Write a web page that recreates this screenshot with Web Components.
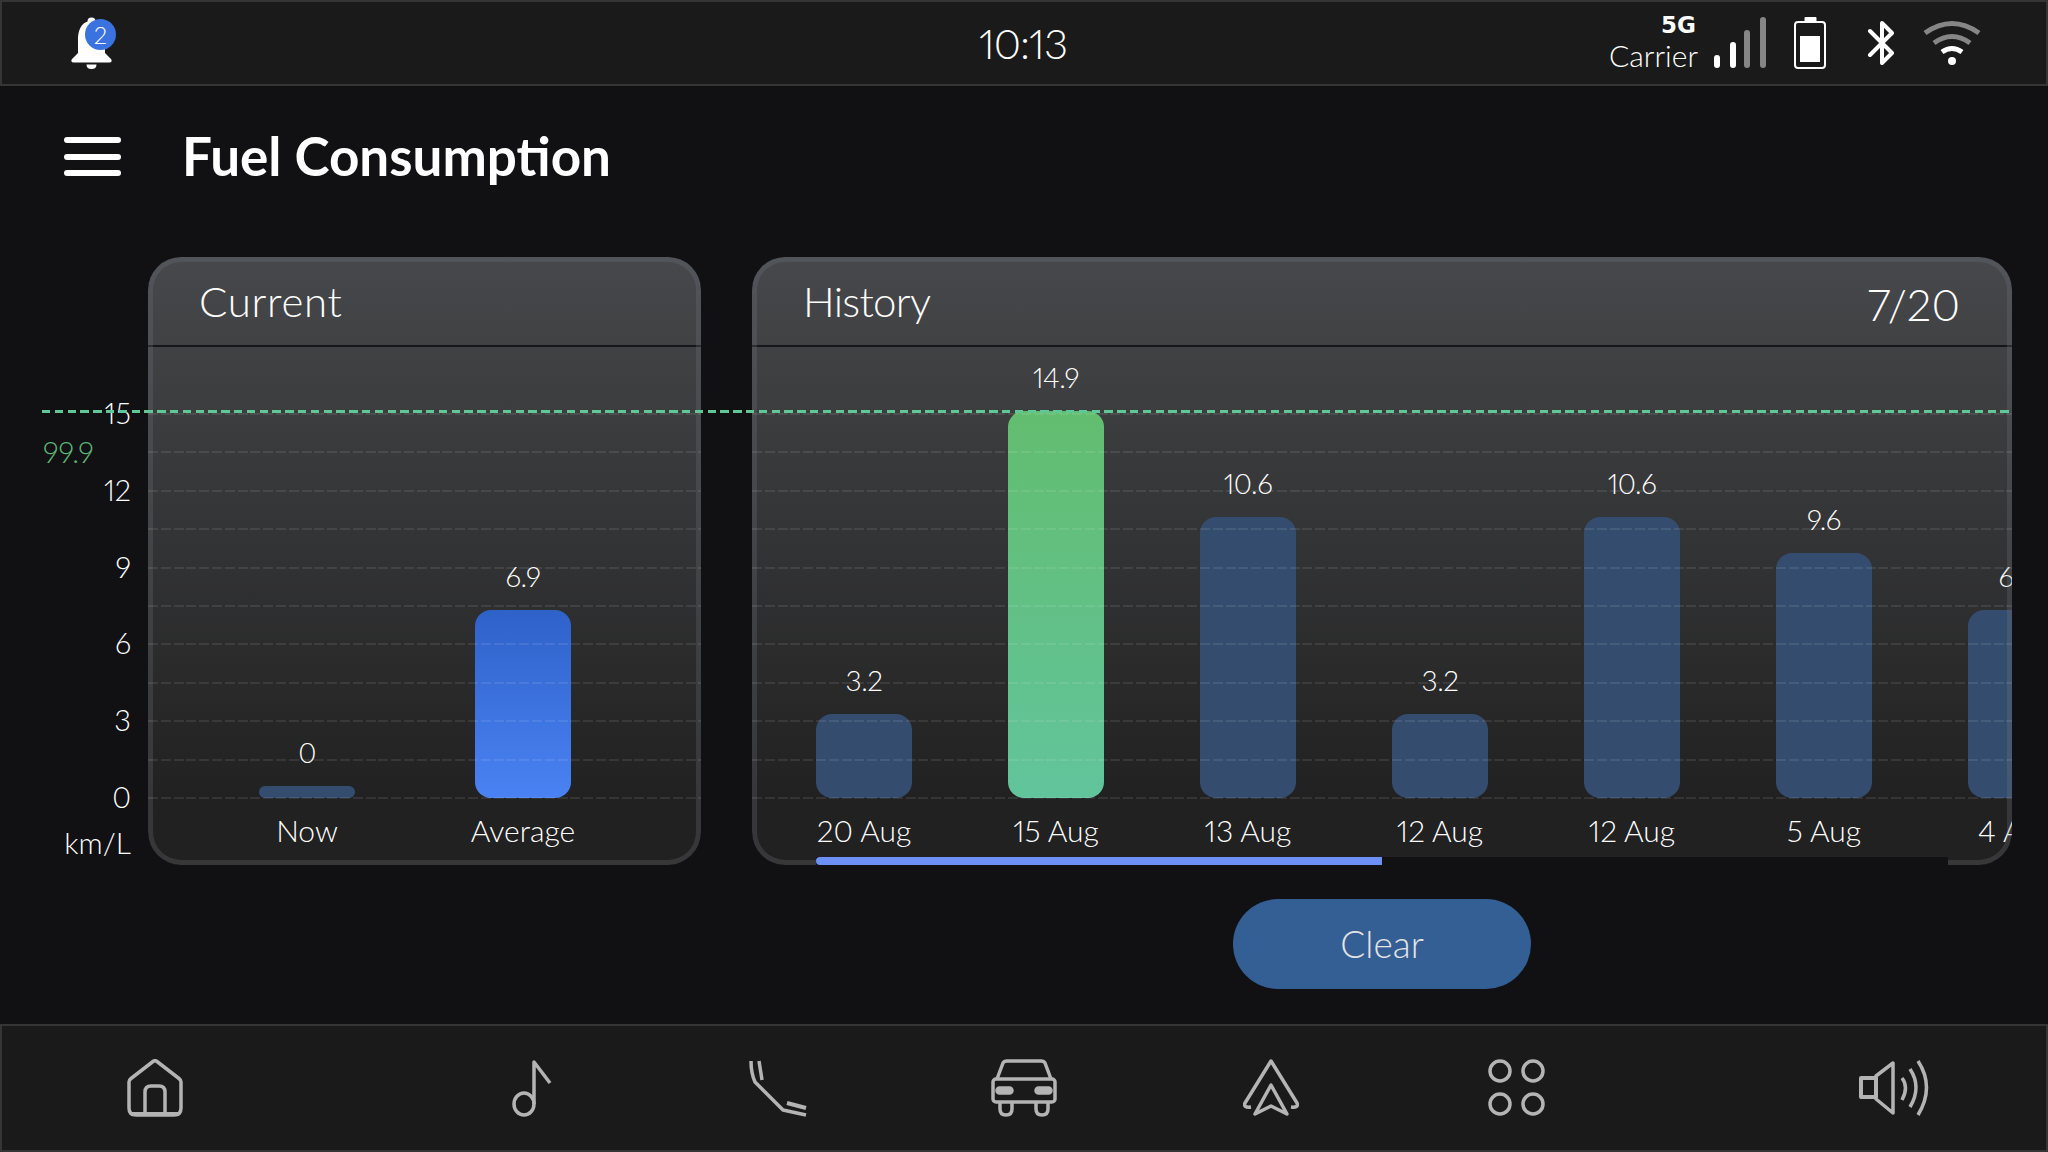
<!DOCTYPE html>
<html lang="en">
<head>
<meta charset="utf-8">
<title>Fuel Consumption</title>
<style>
  html, body { margin: 0; height: 100%; }
  body {
    display: flex;
    flex-direction: column;
    height: 100vh;
    overflow: hidden;
    background: #111114;
    color: #fff;
    font-family: "Lato", "Liberation Sans", sans-serif;
    font-weight: 300;
    font-variant-numeric: proportional-nums;
  }
</style>
</head>
<body>
<status-bar></status-bar>
<title-bar>Fuel Consumption</title-bar>

<chart-area>
  <y-axis slot="axis"></y-axis>
  <chart-panel style="--panel-width:553px;--col-start:51px">
    <span slot="title" style="letter-spacing:.7px">Current</span>
    <bar-column value="0" label="Now" height="12" tone="muted" width="216"></bar-column>
    <bar-column value="6.9" label="Average" height="188" tone="blue" width="216"></bar-column>
  </chart-panel>
  <chart-panel style="--panel-width:1260px;--col-start:16px" scroll>
    <span slot="title" style="letter-spacing:-.7px">History</span>
    <span slot="meta">7/20</span>
    <bar-column value="3.2" label="20 Aug" height="84" tone="muted"></bar-column>
    <bar-column value="14.9" label="15 Aug" height="387" tone="green"></bar-column>
    <bar-column value="10.6" label="13 Aug" height="281" tone="muted"></bar-column>
    <bar-column value="3.2" label="12 Aug" height="84" tone="muted"></bar-column>
    <bar-column value="10.6" label="12 Aug" height="281" tone="muted"></bar-column>
    <bar-column value="9.6" label="5 Aug" height="245" tone="muted"></bar-column>
    <bar-column value="6.9" label="4 Aug" height="188" tone="muted"></bar-column>
  </chart-panel>
</chart-area>

<action-bar><pill-button>Clear</pill-button></action-bar>
<nav-bar></nav-bar>

<script>
const ICONS = {
  home: `<svg width="56" height="58" viewBox="0 0 56 58"><path d="M2 23Q2 21 4 19.5L26 2.5Q28 1 30 2.5L52 19.5Q54 21 54 23V49Q54 56 47 56H9Q2 56 2 49Z"/><path d="M18 56V33Q18 27 24 27H32Q38 27 38 33V56"/><path d="M4 55H52" stroke-width="4"/></svg>`,
  music: `<svg width="40" height="58" viewBox="0 0 40 58"><ellipse cx="12" cy="45" rx="10" ry="11"/><path d="M22 45V3L38 24"/></svg>`,
  phone: `<svg width="58" height="58" viewBox="0 0 58 58"><path d="M2 2Q2 14 6 23L34 51L57 56"/><path d="M10 2L13 21"/><path d="M38 44L57 49" stroke-width="4"/></svg>`,
  car: `<svg width="66" height="58" viewBox="0 0 66 58"><path d="M6 20L12 4Q13 2 16 2H50Q53 2 54 4L60 20"/><rect x="2" y="20" width="62" height="23" rx="3"/><rect x="6" y="29" width="15" height="5" rx="2.5" fill="#b4b4b4"/><rect x="45" y="29" width="15" height="5" rx="2.5" fill="#b4b4b4"/><path d="M9 43V50Q9 56 15 56Q21 56 21 50V43"/><path d="M45 43V50Q45 56 51 56Q57 56 57 50V43"/></svg>`,
  nav: `<svg width="56" height="58" viewBox="0 0 56 58"><path d="M8 48Q0 49 2 44L28 2L54 44Q56 49 48 48"/><path d="M28 26L12 55L28 47L44 55Z"/></svg>`,
  apps: `<svg width="58" height="58" viewBox="0 0 58 58"><circle cx="12" cy="12" r="10"/><circle cx="45" cy="12" r="10"/><circle cx="12" cy="45" r="10"/><circle cx="45" cy="45" r="10"/></svg>`,
  volume: `<svg width="72" height="56" viewBox="0 0 72 56"><rect x="3" y="18" width="15" height="19" stroke-width="4"/><path d="M18 16L35 3V53L18 39Z"/><path d="M44 18Q51 27 44 40"/><path d="M52 9Q64 27 52 47"/><path d="M60 1Q77 27 60 55"/></svg>`
};

class StatusBar extends HTMLElement {
  constructor() {
    super();
    this.attachShadow({ mode: "open" });
    this.shadowRoot.innerHTML = `
      <style>
        :host {
          display: grid;
          grid-template-columns: 1fr auto 1fr;
          align-items: center;
          height: 86px;
          box-sizing: border-box;
          padding: 0 64px 0 69px;
          background: #1a1a1a;
          border: 2px solid #353535;
        }
        .bell { position: relative; width: 46px; height: 52px; margin-top: 0; }
        .badge {
          position: absolute; left: 14px; top: 2px;
          width: 31px; height: 31px; border-radius: 50%;
          background: #3a72e0; color: #fff;
          display: flex; align-items: center; justify-content: center;
          font-size: 24px; line-height: 1;
        }
        .clock { font-size: 42px; line-height: 1; letter-spacing: -1px; margin-right: 7px; }
        .right { display: flex; justify-content: flex-end; align-items: center; }
        .carrier { display: flex; flex-direction: column; align-items: flex-end; margin-right: 16px; }
        .net { font: 700 23px/20px "DejaVu Sans", sans-serif; margin-right: 2px; margin-top: -2px; }
        .name { font-size: 30px; line-height: 30px; margin-top: 5px; }
        svg { display: block; }
        .sig { margin-right: 27px; }
        .bat { margin-right: 40px; }
        .bt { margin-right: 27px; }
      </style>
      <div class="bell">
        <svg width="41" height="52" viewBox="0 0 41 52" fill="#fff">
          <circle cx="20.5" cy="4.5" r="4"/>
          <path d="M20.5 4C10 4 7 14 7 23V36L1 42Q-1 45.500 3 45.500H38Q42 45.500 40 42L34 36V23C34 14 31 4 20.500 4Z"/>
          <path d="M15.500 47.500H25.500Q25.500 52 20.500 52Q15.500 52 15.500 47.500Z"/>
        </svg>
        <span class="badge">2</span>
      </div>
      <div class="clock">10:13</div>
      <div class="right">
        <div class="carrier"><span class="net">5G</span><span class="name">Carrier</span></div>
        <svg class="sig" width="53" height="52" viewBox="0 0 53 52" fill="#fff">
          <rect x="0" y="38" width="6" height="13" rx="3"/>
          <rect x="16" y="25" width="6" height="26" rx="3"/>
          <rect x="30" y="13" width="6" height="38" rx="3" fill="#868686"/>
          <rect x="46" y="0" width="6" height="51" rx="3" fill="#868686"/>
        </svg>
        <svg class="bat" width="33" height="52" viewBox="0 0 33 52" fill="#fff">
          <rect x="10.500" y="0" width="12" height="6" rx="1"/>
          <rect x="1" y="5" width="30" height="46" rx="3" fill="none" stroke="#fff" stroke-width="2"/>
          <rect x="6" y="19" width="20" height="26"/>
        </svg>
        <svg class="bt" width="28" height="44" viewBox="0 0 28 44" fill="none" stroke="#fff" stroke-width="4" stroke-linejoin="round" stroke-linecap="round">
          <path d="M3 10L25 32L15 42V2L25 12L3 34"/>
        </svg>
        <svg width="60" height="46" viewBox="0 0 60 46" fill="none" stroke-width="5" stroke-linecap="butt">
          <path d="M3 13Q30 -6 57 13" stroke="#868686"/>
          <path d="M12 23Q30 10 48 23" stroke="#868686"/>
          <path d="M20 32Q30 25 40 32" stroke="#fff"/>
          <circle cx="30" cy="41" r="4" fill="#fff"/>
        </svg>
      </div>
    `;
  }
}

class TitleBar extends HTMLElement {
  constructor() {
    super();
    this.attachShadow({ mode: "open" });
    this.shadowRoot.innerHTML = `
      <style>
        :host {
          display: flex;
          align-items: flex-start;
          gap: 61px;
          height: 171px;
          box-sizing: border-box;
          padding: 51px 0 0 64px;
        }
        .menu { display: flex; flex-direction: column; gap: 10.500px; width: 57px; }
        .menu i { display: block; height: 6px; border-radius: 3px; background: #fff; }
        h1 { margin: -11px 0 0; font-size: 53px; font-weight: 700; line-height: 60px; }
      </style>
      <div class="menu"><i></i><i></i><i></i></div>
      <h1><slot></slot></h1>
    `;
  }
}

class ChartArea extends HTMLElement {
  constructor() {
    super();
    this.attachShadow({ mode: "open" });
    this.shadowRoot.innerHTML = `
      <style>
        :host {
          display: flex;
          position: relative;
          height: 608px;
          padding-right: 36px;
        }
        .axis { display: block; width: 131px; margin-right: 17px; }
        .panels { display: flex; gap: 51px; }
        .limit {
          position: absolute; left: 42px; right: 36px; top: 153px; height: 3px;
          background: repeating-linear-gradient(90deg, #5fc896 0 8.500px, transparent 8.500px 12.800px);
        }
      </style>
      <div class="axis"><slot name="axis"></slot></div>
      <div class="panels"><slot></slot></div>
      <div class="limit"></div>
    `;
  }
}

class YAxis extends HTMLElement {
  constructor() {
    super();
    this.attachShadow({ mode: "open" });
    const ticks = [15, 12, 9, 6, 3, 0].map((n) => `<div class="tick">${n}</div>`).join("");
    this.shadowRoot.innerHTML = `
      <style>
        :host {
          display: block;
          position: relative;
          padding-top: 118px;
          font-size: 29px;
          text-align: right;
        }
        .tick { height: 76.800px; line-height: 76.800px; }
        .unit { margin-top: -12px; line-height: 36px; font-size: 30px; }
        .limit { position: absolute; left: 43px; top: 177px; line-height: 36px; color: #5fb878; }
      </style>
      ${ticks}
      <div class="unit">km/L</div>
      <div class="limit">99.9</div>
    `;
  }
}

class ChartPanel extends HTMLElement {
  constructor() {
    super();
    this.attachShadow({ mode: "open" });
    const lines = Array.from({ length: 11 }, () => "<i></i>").join("");
    const scroll = this.hasAttribute("scroll")
      ? `<div class="track"><div class="thumb"></div></div>`
      : "";
    this.shadowRoot.innerHTML = `
      <style>
        :host {
          display: flex;
          flex-direction: column;
          position: relative;
          overflow: hidden;
          width: var(--panel-width);
          height: 608px;
          box-sizing: border-box;
          border-radius: 33px;
          background: linear-gradient(#47484b 0, #212121 89.500%, #212121 100%);
        }
        header {
          display: flex;
          justify-content: space-between;
          align-items: center;
          flex: none;
          height: 90px;
          box-sizing: border-box;
          padding: 0 52px 0 51px;
          border-bottom: 2px solid #15161a;
          font-size: 42px;
        }
        .meta { font-size: 44px; margin-top: 5px; }
        .plot {
          flex: 1;
          display: flex;
          align-items: flex-end;
          padding: 0 0 17px var(--col-start);
          overflow: hidden;
        }
        .grid {
          position: absolute; left: 0; right: 0; top: 156px; height: 386px;
          display: flex; flex-direction: column; justify-content: space-between;
        }
        .grid i {
          display: block; height: 2px;
          background: repeating-linear-gradient(90deg, rgba(255,255,255,.085) 0 10px, transparent 10px 12.800px);
        }
        .edge {
          position: absolute; inset: 0; padding: 5px; border-radius: inherit;
          background: linear-gradient(rgba(120,130,145,.22), rgba(120,120,125,.26));
          -webkit-mask: linear-gradient(#000 0 0) content-box, linear-gradient(#000 0 0);
          -webkit-mask-composite: xor;
          mask-composite: exclude;
        }
        .track {
          position: absolute; left: 64px; width: 1132px; bottom: 0; height: 8px;
          background: #111114;
        }
        .thumb { width: 566px; height: 8px; border-radius: 4px 0 0 4px; background: #6d90f7; }
      </style>
      <header>
        <span><slot name="title"></slot></span>
        <span class="meta"><slot name="meta"></slot></span>
      </header>
      <div class="plot"><slot></slot></div>
      <div class="edge"></div>
      <div class="grid">${lines}</div>
      ${scroll}
    `;
  }
}

class BarColumn extends HTMLElement {
  constructor() {
    super();
    this.attachShadow({ mode: "open" });
    const tone = this.getAttribute("tone") || "muted";
    const height = parseInt(this.getAttribute("height") || "0");
    const width = parseInt(this.getAttribute("width") || "192");
    const fills = {
      muted: "#344d6f",
      blue: "linear-gradient(#2f62c9, #4a82f3)",
      green: "linear-gradient(#62bd6f, #62c49c)"
    };
    this.shadowRoot.innerHTML = `
      <style>
        :host {
          display: flex;
          flex-direction: column;
          align-items: center;
          flex: 0 0 ${width}px;
          width: ${width}px;
          white-space: nowrap;
        }
        .value { font-size: 28px; letter-spacing: -.5px; line-height: 36px; margin-bottom: 16px; }
        .bar {
          width: 96px;
          height: ${height}px;
          border-radius: ${height < 20 ? 6 : 16}px;
          background: ${fills[tone]};
        }
        .label { font-size: 30px; line-height: 36px; margin-top: 14px; }
      </style>
      <div class="value">${this.getAttribute("value")}</div>
      <div class="bar"></div>
      <div class="label">${this.getAttribute("label")}</div>
    `;
  }
}

class ActionBar extends HTMLElement {
  constructor() {
    super();
    this.attachShadow({ mode: "open" });
    this.shadowRoot.innerHTML = `
      <style>
        :host {
          display: flex;
          justify-content: center;
          align-items: flex-start;
          flex: 1;
          padding: 34px 36px 0 752px;
        }
      </style>
      <slot></slot>
    `;
  }
}

class PillButton extends HTMLElement {
  constructor() {
    super();
    this.attachShadow({ mode: "open" });
    this.shadowRoot.innerHTML = `
      <style>
        :host {
          display: flex;
          align-items: center;
          justify-content: center;
          width: 298px;
          height: 90px;
          box-sizing: border-box;
          padding-bottom: 2px;
          border-radius: 45px;
          background: #345f94;
          color: #e4e4e4;
          font-size: 37px;
          font-weight: 300;
        }
      </style>
      <slot></slot>
    `;
  }
}

class NavBar extends HTMLElement {
  constructor() {
    super();
    this.attachShadow({ mode: "open" });
    const cell = (name) => `<div class="cell" title="${name}">${ICONS[name]}</div>`;
    this.shadowRoot.innerHTML = `
      <style>
        :host {
          display: flex;
          justify-content: space-between;
          align-items: center;
          flex: none;
          height: 128px;
          box-sizing: border-box;
          padding: 0 29px 0 30px;
          background: #1a1a1a;
          border: 2px solid #353535;
        }
        .group { display: flex; }
        .cell { display: flex; justify-content: center; width: 246.400px; }
        svg { display: block; fill: none; stroke: #b4b4b4; stroke-width: 3.500px; stroke-linejoin: round; }
      </style>
      ${cell("home")}
      <div class="group">${["music", "phone", "car", "nav", "apps"].map(cell).join("")}</div>
      ${cell("volume")}
    `;
  }
}

customElements.define("status-bar", StatusBar);
customElements.define("title-bar", TitleBar);
customElements.define("chart-area", ChartArea);
customElements.define("y-axis", YAxis);
customElements.define("chart-panel", ChartPanel);
customElements.define("bar-column", BarColumn);
customElements.define("action-bar", ActionBar);
customElements.define("pill-button", PillButton);
customElements.define("nav-bar", NavBar);
</script>
</body>
</html>
